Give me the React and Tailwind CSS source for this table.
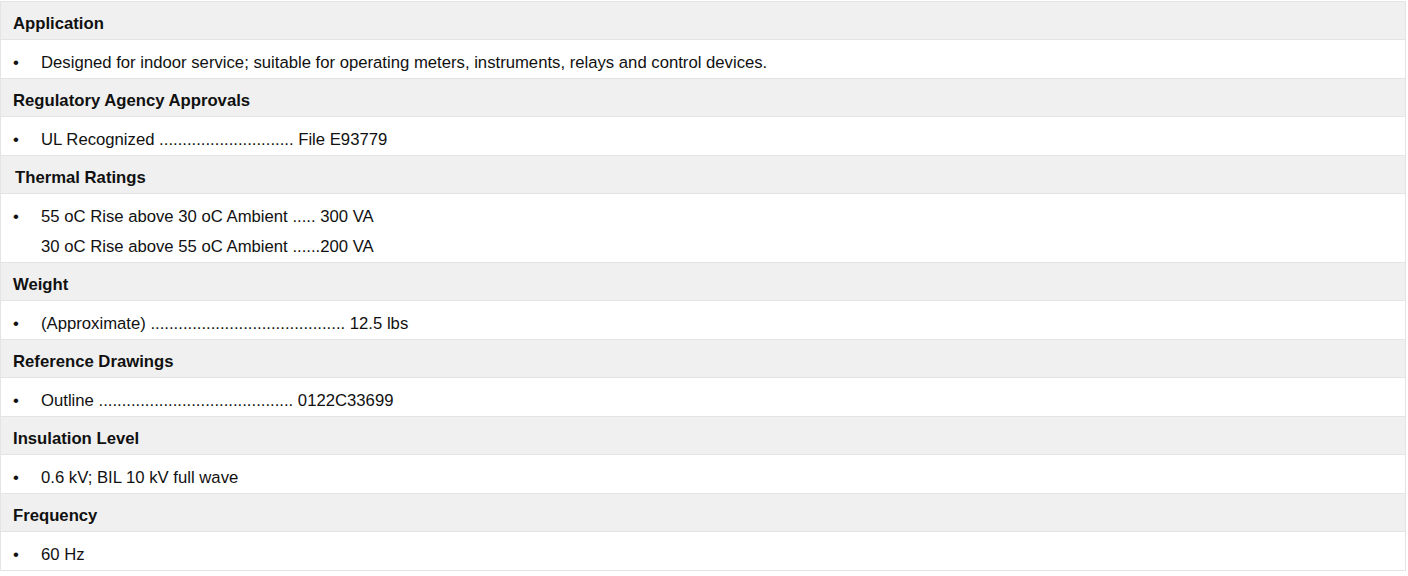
import React from "react";

const sections = [
  {
    title: "Application",
    lines: ["Designed for indoor service; suitable for operating meters, instruments, relays and control devices."],
  },
  {
    title: "Regulatory Agency Approvals",
    lines: ["UL Recognized ............................. File E93779"],
  },
  {
    title: "Thermal Ratings",
    indent: true,
    lines: [
      "55 oC Rise above 30 oC Ambient ..... 300 VA",
      "30 oC Rise above 55 oC Ambient ......200 VA",
    ],
  },
  {
    title: "Weight",
    lines: ["(Approximate) .......................................... 12.5 lbs"],
  },
  {
    title: "Reference Drawings",
    lines: ["Outline .......................................... 0122C33699"],
  },
  {
    title: "Insulation Level",
    lines: ["0.6 kV; BIL 10 kV full wave"],
  },
  {
    title: "Frequency",
    lines: ["60 Hz"],
  },
];

const App = () => {
  return (
    <div className="bg-white pt-px" style={{ fontFamily: "'Liberation Sans', Arial, sans-serif" }}>
      <div className="w-[1406px] border border-[#e4e4e4] text-[16.7px] text-[#111]">
        {sections.map((s, i) => (
          <div key={s.title}>
            {/* header */}
            <div
              className={`${s.indent ? "pl-[14px]" : "pl-3"} h-[38px] pt-[7px] flex items-center bg-[#f0f0f0] border-b border-[#e4e4e4] font-bold`}
            >
              {s.title}
            </div>

            {/* body */}
            <div className={`${i < sections.length - 1 ? "border-b border-[#e4e4e4]" : ""} bg-white pl-3 pt-2`}>
              {s.lines.map((line, j) => (
                <div key={j} className="flex leading-[30px]">
                  <span className="w-[28px] shrink-0">{j === 0 ? "•" : ""}</span>
                  <span>{line}</span>
                </div>
              ))}
            </div>
          </div>
        ))}
      </div>
    </div>
  );
};

export default App;
